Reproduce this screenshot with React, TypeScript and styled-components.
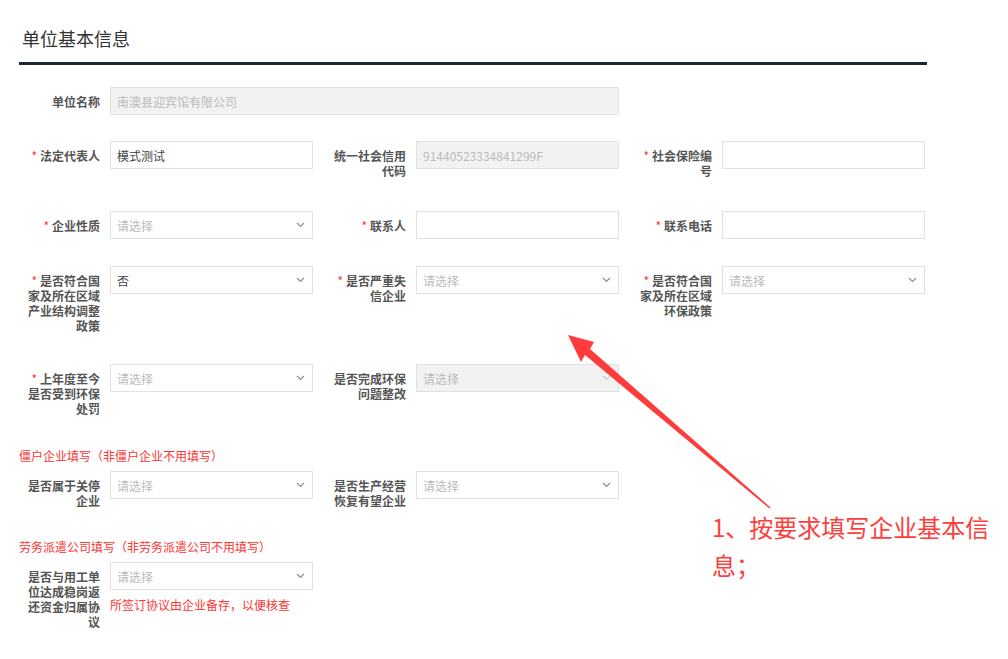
import React from 'react';
import styled, { createGlobalStyle } from 'styled-components';

const GlobalStyle = createGlobalStyle`
	body {
		margin: 0;
		background: #fff;
		font-family: "Noto Sans CJK SC", "Noto Sans", sans-serif;
	}
`;

type FieldDef = {
	label: string,
	required?: boolean,
	kind: 'input' | 'select',
	value?: string,
	disabled?: boolean,
	wide?: boolean,
	note?: string
}

const rows: { fields: FieldDef[], section?: string, space?: number }[] = [
	{ fields: [{ label: '单位名称', kind: 'input', value: '南澳县迎宾馆有限公司', disabled: true, wide: true }] },
	{
		space: 26,
		fields: [
			{ label: '法定代表人', required: true, kind: 'input', value: '模式测试' },
			{ label: '统一社会信用代码', kind: 'input', value: '91440523334841299F', disabled: true },
			{ label: '社会保险编号', required: true, kind: 'input' }
		]
	},
	{
		space: 26,
		fields: [
			{ label: '企业性质', required: true, kind: 'select' },
			{ label: '联系人', required: true, kind: 'input' },
			{ label: '联系电话', required: true, kind: 'input' }
		]
	},
	{
		space: 24,
		fields: [
			{ label: '是否符合国家及所在区域产业结构调整政策', required: true, kind: 'select', value: '否' },
			{ label: '是否严重失信企业', required: true, kind: 'select' },
			{ label: '是否符合国家及所在区域环保政策', required: true, kind: 'select' }
		]
	},
	{
		space: 24,
		fields: [
			{ label: '上年度至今是否受到环保处罚', required: true, kind: 'select' },
			{ label: '是否完成环保问题整改', kind: 'select', disabled: true }
		]
	},
	{
		space: 23,
		section: '僵户企业填写（非僵户企业不用填写）',
		fields: [
			{ label: '是否属于关停企业', kind: 'select' },
			{ label: '是否生产经营恢复有望企业', kind: 'select' }
		]
	},
	{
		section: '劳务派遣公司填写（非劳务派遣公司不用填写）',
		fields: [
			{ label: '是否与用工单位达成稳岗返还资金归属协议', kind: 'select', note: '所签订协议由企业备存，以便核查' }
		]
	}
];

const Chevron: React.FC<{ faded?: boolean }> = ({ faded }) => (
	<svg width="9" height="6" viewBox="0 0 9 6">
		<polyline points="1,1 4.5,4.5 8,1" fill="none" stroke={faded ? '#ccc' : '#8a8f99'} strokeWidth="1.2" />
	</svg>
);

const Field: React.FC<{ f: FieldDef }> = ({ f }) => (
	<FieldWrap>
		<Label>
			{f.required && <Star>*</Star>}
			{f.label}
		</Label>
		<Control>
			<Box wide={f.wide} disabled={f.disabled}>
				<BoxText muted={!f.value || f.disabled}>{f.value || (f.kind === 'select' ? '请选择' : '')}</BoxText>
				{f.kind === 'select' && <Chevron faded={f.disabled} />}
			</Box>
			{f.note && <Note>{f.note}</Note>}
		</Control>
	</FieldWrap>
);

const App: React.FC = () => {
	return <Page>
		<GlobalStyle />
		<Title>单位基本信息</Title>
		<Form>
			{rows.map((r, i) => (
				<React.Fragment key={i}>
					{r.section && <Section>{r.section}</Section>}
					<Row space={r.space}>
						{r.fields.map((f, j) => <Field key={j} f={f} />)}
					</Row>
				</React.Fragment>
			))}
		</Form>
		<Arrow viewBox="0 0 1008 659" width="1008" height="659">
			<polygon
				points="568,335 594,342 590,349 770.5,507.5 769.5,508.5 585,355 581,362"
				fill="#ff3b3b"
			/>
		</Arrow>
		<Annotation>1、按要求填写企业基本信息；</Annotation>
	</Page>;
};

const Page = styled.div`
	position: relative;
	width: 1008px;
	height: 659px;
	overflow: hidden;
	padding: 0 19px;
	box-sizing: border-box;
`

const Title = styled.h2`
	width: 908px;
	margin: 0;
	padding: 26px 0 12px 3px;
	box-sizing: border-box;
	font-size: 18px;
	line-height: 24px;
	font-weight: normal;
	color: #333;
	border-bottom: 3px solid #1d2631;
`

const Form = styled.div`
	padding-top: 22px;
`

const Row = styled.div<{ space?: number }>`
	display: flex;
	gap: 19px;
	padding-left: 7px;
	margin-bottom: ${props => props.space ?? 25}px;
`

const FieldWrap = styled.div`
	display: flex;
	align-items: flex-start;
`

const Label = styled.div`
	width: 74px;
	margin-right: 10px;
	padding: 7px 0;
	font-size: 12px;
	line-height: 15px;
	font-weight: bold;
	color: #555;
	text-align: right;
`

const Star = styled.span`
	display: inline-block;
	color: #f33;
	margin-right: 3px;
	font-weight: normal;
`

const Control = styled.div`
	display: flex;
	flex-direction: column;
`

const Box = styled.div<{ wide?: boolean, disabled?: boolean }>`
	width: ${props => props.wide ? '509px' : '203px'};
	height: 28px;
	box-sizing: border-box;
	border: 1px solid #e1e1e1;
	background: ${props => props.disabled ? '#f2f2f2' : '#fff'};
	padding: 0 7px 0 6px;
	display: flex;
	align-items: center;
	justify-content: space-between;
`

const BoxText = styled.span<{ muted?: boolean }>`
	font-size: 12px;
	color: ${props => props.muted ? '#bbb' : '#444'};
`

const Note = styled.div`
	margin-top: 7px;
	font-size: 12px;
	line-height: 15px;
	color: #f33;
`

const Section = styled.div`
	font-size: 12px;
	line-height: 20px;
	color: #f33;
	margin-top: -1px;
	margin-bottom: 5px;
`

const Arrow = styled.svg`
	position: absolute;
	left: 0;
	top: 0;
	pointer-events: none;
`

const Annotation = styled.div`
	position: absolute;
	left: 712px;
	top: 508px;
	width: 290px;
	font-size: 24px;
	line-height: 38px;
	color: #ff3d3d;
`

export default App;
